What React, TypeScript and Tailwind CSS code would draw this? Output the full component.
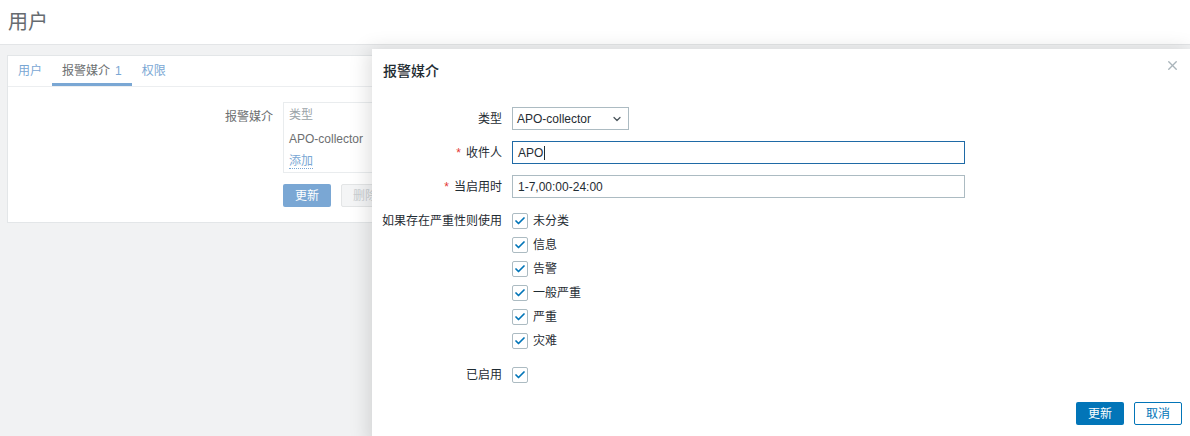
import { X, ChevronDown, Check } from "lucide-react";

const font = "font-['Liberation_Sans','Noto_Sans_CJK_SC',sans-serif]";

const severities = ["未分类", "信息", "告警", "一般严重", "严重", "灾难"];

function CheckBox() {
  return (
    <span className="flex h-[16px] w-[16px] items-center justify-center rounded-[2px] border border-[#acbbc2] bg-white">
      <Check size={12} strokeWidth={3.5} className="text-[#0275b8]" />
    </span>
  );
}

function Label({ children, required }: { children: React.ReactNode; required?: boolean }) {
  return (
    <div className="flex h-[23px] items-center justify-end whitespace-nowrap text-[12px] text-[#1f2c33]">
      {required && <span className="mr-[5px] text-[#e33734]">*</span>}
      {children}
    </div>
  );
}

export default function App() {
  return (
    <div className={`relative h-[436px] w-[1190px] overflow-hidden bg-[#f1f2f3] ${font}`}>
      {/* page header */}
      <header className="flex h-[45px] items-center border-b border-[#e3e5e7] bg-white px-[8px]">
        <h1 className="text-[20px] leading-none text-[#666b70]">用户</h1>
      </header>

      {/* background card */}
      <div className="ml-[7px] mt-[10px] w-[1175px] border border-[#e3e6e8] bg-white">
        <ul className="flex h-[31px] items-stretch border-b border-[#eceef0] text-[12px]">
          <li className="flex items-center px-[10px] text-[#7aa7d4]">用户</li>
          <li className="flex items-center border-b-[3px] border-[#7aa7d4] px-[10px] pt-[3px] text-[#6d6f71]">
            报警媒介<span className="ml-[5px] text-[#7aa7d4]">1</span>
          </li>
          <li className="flex items-center px-[10px] text-[#7aa7d4]">权限</li>
        </ul>
        <div className="flex gap-[10px] pb-[15px] pt-[15px]">
          <div className="w-[265px] pt-[6px] text-right text-[12px] text-[#6d6f71]">报警媒介</div>
          <div className="flex flex-col">
            <div className="flex h-[71px] w-[400px] flex-col justify-center gap-[6px] border border-[#e9ecee] px-[5px] text-[12px]">
              <span className="text-[#9aa3a8]">类型</span>
              <span className="text-[#6d6f71]">APO-collector</span>
              <span className="w-fit border-b border-dotted border-[#7aa7d4] leading-[14px] text-[#7aa7d4]">添加</span>
            </div>
            <div className="mt-[11px] flex gap-[10px]">
              <button className="h-[23px] w-[48px] rounded-[2px] bg-[#7aa7d4] text-[12px] text-white">更新</button>
              <button className="h-[23px] w-[48px] rounded-[2px] border border-[#e3e5e6] bg-[#f4f5f6] text-[12px] text-[#c9ced1]">删除</button>
            </div>
          </div>
        </div>
      </div>

      {/* dialog */}
      <div className="absolute bottom-[-10px] left-[372px] top-[49px] w-[820px] bg-white shadow-[-4px_0_18px_rgba(0,0,0,0.13)]">
        <div className="flex items-start justify-between pl-[11px] pr-[12px] pt-[12px]">
          <h2 className="text-[14px] font-medium leading-[20px] text-[#1f2c33]">报警媒介</h2>
          <X size={15} strokeWidth={2.2} className="-mt-[3px] text-[#a9b4ba]" />
        </div>

        <div className="mt-[26px] grid grid-cols-[119px_453px] gap-x-[10px] gap-y-[11px] px-[11px]">
          <Label>类型</Label>
          <div className="flex h-[23px] w-[117px] items-center justify-between border border-[#acbbc2] pl-[4px] pr-[5px] text-[12px] text-[#1f2c33]">
            APO-collector
            <ChevronDown size={12} strokeWidth={2.5} className="text-[#4a555c]" />
          </div>

          <Label required>收件人</Label>
          <div className="flex h-[23px] items-center border border-[#1f6aa6] px-[5px] text-[12px] text-[#1f2c33]">
            APO<span className="ml-[1px] h-[14px] w-px bg-[#1f2c33]" />
          </div>

          <Label required>当启用时</Label>
          <div className="flex h-[23px] items-center border border-[#acbbc2] px-[5px] text-[12px] text-[#1f2c33]">
            1-7,00:00-24:00
          </div>

          <Label>如果存在严重性则使用</Label>
          <div className="flex flex-col gap-[1px]">
            {severities.map((s) => (
              <div key={s} className="flex h-[23px] items-center gap-[5px] text-[12px] text-[#1f2c33]">
                <CheckBox />
                {s}
              </div>
            ))}
          </div>

          <Label>已启用</Label>
          <div className="flex h-[23px] items-center">
            <CheckBox />
          </div>
        </div>

        <div className="absolute right-[10px] top-[353px] flex gap-[10px]">
          <button className="h-[23px] w-[48px] rounded-[2px] bg-[#0275b8] text-[12px] text-white">更新</button>
          <button className="h-[23px] w-[48px] rounded-[2px] border border-[#0275b8] bg-white text-[12px] text-[#0275b8]">取消</button>
        </div>
      </div>
    </div>
  );
}
